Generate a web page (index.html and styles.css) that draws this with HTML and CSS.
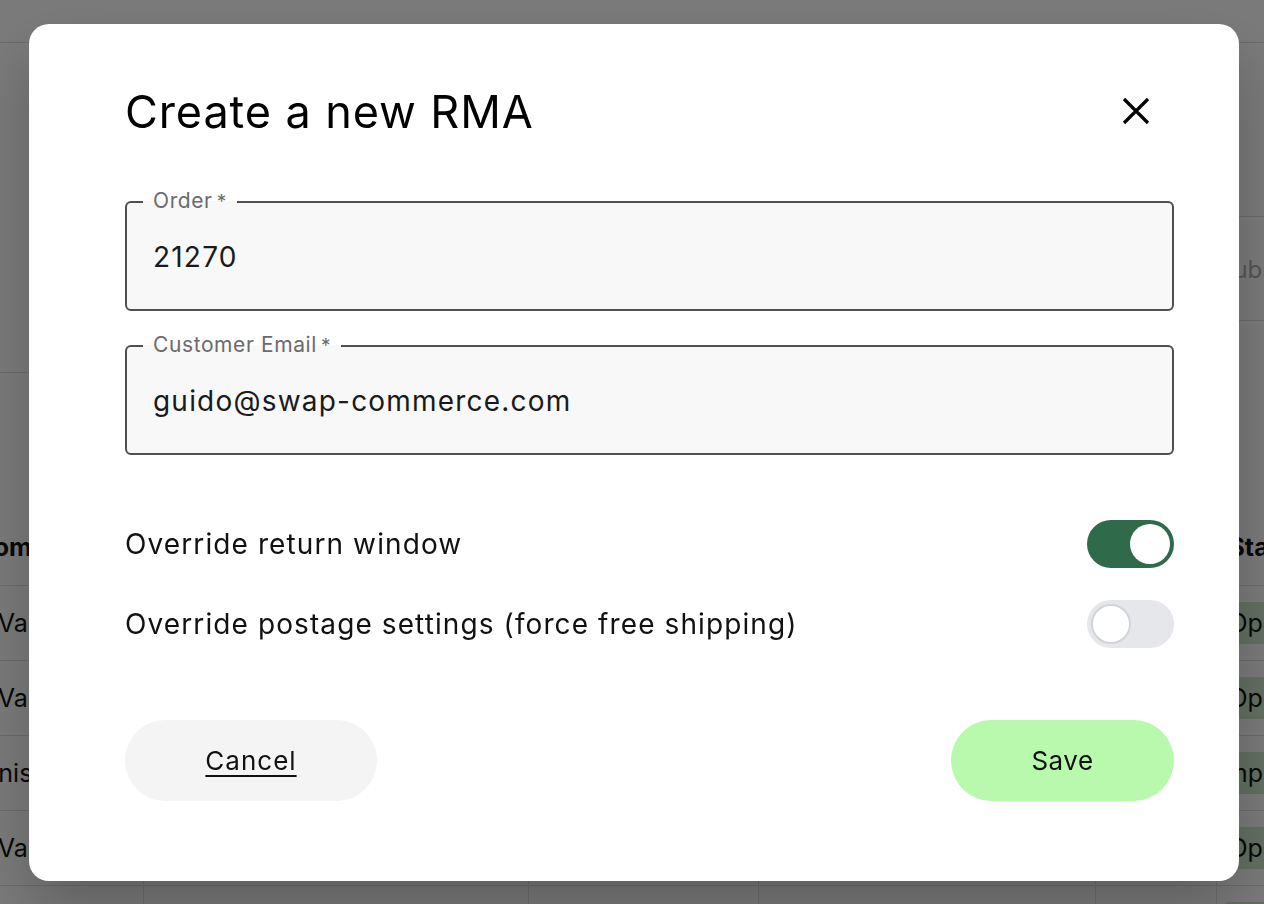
FILE: index.html
```html
<!DOCTYPE html>
<html lang="en">
<head>
<meta charset="utf-8">
<title>Create a new RMA</title>
<link rel="stylesheet" href="styles.css">
</head>
<body>
<div class="page">
  <div class="topbar"></div>
  <div class="summary">
    <div class="summary-left"></div>
    <div class="summary-right">
      <div class="search-box">Subscription</div>
    </div>
  </div>
  <div class="table-wrap">
    <table class="table">
      <thead>
        <tr><th class="c1">From</th><th class="c2">Order</th><th class="c3">Date</th><th class="c4">Reason</th><th class="c5">Items</th><th class="c6">Status</th></tr>
      </thead>
      <tbody>
        <tr><td class="c1">J. Vance</td><td class="c2">21270</td><td class="c3">12 Mar</td><td class="c4">Size</td><td class="c5">1</td><td class="c6"><span class="chip">Open</span></td></tr>
        <tr><td class="c1">J. Vance</td><td class="c2">21268</td><td class="c3">11 Mar</td><td class="c4">Size</td><td class="c5">2</td><td class="c6"><span class="chip">Open</span></td></tr>
        <tr><td class="c1">Janis</td><td class="c2">21255</td><td class="c3">10 Mar</td><td class="c4">Damaged</td><td class="c5">1</td><td class="c6 c6-done"><span class="chip">Completed</span></td></tr>
        <tr><td class="c1">J. Vance</td><td class="c2">21240</td><td class="c3">09 Mar</td><td class="c4">Colour</td><td class="c5">1</td><td class="c6"><span class="chip">Open</span></td></tr>
        <tr><td class="c1">J. Vance</td><td class="c2">21231</td><td class="c3">08 Mar</td><td class="c4">Size</td><td class="c5">3</td><td class="c6"><span class="chip">Open</span></td></tr>
      </tbody>
    </table>
  </div>
</div>

<div class="backdrop">
  <div class="modal" role="dialog" aria-labelledby="modal-title">
    <div class="modal-header">
      <h1 id="modal-title" class="modal-title">Create a new RMA</h1>
      <button class="close-btn" aria-label="Close">
        <svg width="28" height="28" viewBox="0 0 28 28" aria-hidden="true">
          <path d="M2 2 L26 26 M26 2 L2 26" stroke="#000" stroke-width="3.2" stroke-linecap="butt" fill="none"/>
        </svg>
      </button>
    </div>

    <div class="field">
      <span class="field-label">Order<span class="req">*</span></span>
      <span class="field-value">21270</span>
    </div>

    <div class="field field-email">
      <span class="field-label">Customer Email<span class="req">*</span></span>
      <span class="field-value">guido@swap-commerce.com</span>
    </div>

    <div class="toggle-row toggle-row-first">
      <span class="toggle-label">Override return window</span>
      <span class="toggle toggle-on"><span class="knob"></span></span>
    </div>
    <div class="toggle-row">
      <span class="toggle-label">Override postage settings (force free shipping)</span>
      <span class="toggle toggle-off"><span class="knob"></span></span>
    </div>

    <div class="actions">
      <button class="btn btn-cancel">Cancel</button>
      <button class="btn btn-save">Save</button>
    </div>
  </div>
</div>
</body>
</html>
```

FILE: styles.css
```css
* { box-sizing: border-box; }

html, body {
  margin: 0;
  padding: 0;
}

body {
  width: 1264px;
  height: 904px;
  overflow: hidden;
  background: #ffffff;
  font-family: Inter, "Liberation Sans", Arial, sans-serif;
  color: #111;
}

/* ---------- page behind the dialog ---------- */
.page {
  width: 1264px;
  height: 904px;
  overflow: hidden;
}

.topbar {
  height: 43px;
  border-bottom: 1px solid #e2e2e2;
}

.summary {
  display: flex;
  height: 330px;
}

.summary-left {
  flex: 1;
  border-bottom: 1px solid #e2e2e2;
}

.summary-right {
  width: 58px;
  padding-top: 173px;
}

.search-box {
  height: 105px;
  border-top: 1px solid #e2e2e2;
  border-bottom: 1px solid #e2e2e2;
  padding: 38px 0 0 12px;
  font-size: 24px;
  color: #b0b0b0;
  white-space: nowrap;
  overflow: hidden;
}

.table-wrap {
  margin-top: 137px;
  margin-left: -100px;
  width: 1600px;
}

.table {
  width: 1528px;
  border-collapse: collapse;
  table-layout: fixed;
  font-size: 25px;
}

.table th,
.table td {
  height: 75px;
  border-bottom: 1px solid #e2e2e2;
  border-right: 1px solid #e2e2e2;
  padding: 0 12px;
  text-align: left;
  white-space: nowrap;
  overflow: hidden;
}

.table th { font-weight: 700; }

.table th.c1,
.table td.c1 { width: 243px; padding-left: 70px; }
.c2 { width: 385px; }
.c3 { width: 230px; }
.c4 { width: 337px; }
.c5 { width: 121px; }
.table th.c6,
.table td.c6 { width: 212px; border-right: 0; padding-left: 6px; }
.table th.c6 { padding-left: 12px; }
.table td.c6-done { padding-left: 0; }
.table td.c6-done .chip { margin-left: -30px; }

.chip {
  display: inline-block;
  padding: 6px 10px 6px 6px;
  border-radius: 6px;
  background: #cfe8cc;
}

/* ---------- dialog ---------- */
.backdrop {
  position: fixed;
  inset: 0;
  background: rgba(0, 0, 0, 0.52);
  padding: 24px 25px 23px 29px;
}

.modal {
  width: 1210px;
  height: 857px;
  background: #fff;
  border-radius: 20px;
  padding: 57px 65px 80px 96px;
  display: flex;
  flex-direction: column;
  box-shadow: 0 30px 60px rgba(0, 0, 0, 0.22);
}

.modal-header {
  height: 60px;
  display: flex;
  align-items: center;
  justify-content: space-between;
  margin-bottom: 60px;
}

.modal-title {
  margin: 0;
  font-size: 45px;
  font-weight: 400;
  color: #000;
  letter-spacing: 0.9px;
  line-height: 1;
}

.close-btn {
  width: 28px;
  height: 28px;
  padding: 0;
  margin-right: 24px;
  border: 0;
  background: none;
  display: flex;
}

.field {
  position: relative;
  height: 110px;
  border: 2px solid #4f4f4f;
  border-radius: 6px;
  background: #f8f8f8;
  display: flex;
  align-items: center;
  padding: 0 0 0 26px;
}

.field-email { margin-top: 34px; }

.field-label {
  position: absolute;
  top: -15px;
  left: 16px;
  padding: 0 10px;
  font-size: 21px;
  line-height: 26px;
  letter-spacing: 0.6px;
  color: #6b6b6b;
  background: linear-gradient(#fff 50%, #f8f8f8 50%);
}

.req {
  margin-left: 4px;
  font-size: 19px;
}

.field-value {
  font-size: 28px;
  letter-spacing: 1.2px;
  color: #1a1a1a;
  margin-top: 2px;
}

.toggle-row {
  height: 48px;
  display: flex;
  align-items: center;
  justify-content: space-between;
  margin-top: 32px;
}

.toggle-row-first { margin-top: 65px; }

.toggle-label {
  font-size: 28px;
  letter-spacing: 1.1px;
  color: #111;
}

.toggle {
  width: 87px;
  height: 48px;
  border-radius: 24px;
  display: flex;
  align-items: center;
  padding: 0 4px;
}

.toggle-on {
  background: #2f6b4a;
  justify-content: flex-end;
}

.toggle-off {
  background: #e6e7eb;
  justify-content: flex-start;
}

.knob {
  width: 40px;
  height: 40px;
  border-radius: 50%;
  background: #fff;
}

.toggle-off .knob {
  border: 2px solid #d2d4d9;
}

.actions {
  margin-top: 72px;
  display: flex;
  justify-content: space-between;
}

.btn {
  height: 81px;
  border: 0;
  border-radius: 41px;
  font-family: Inter, "Liberation Sans", Arial, sans-serif;
  font-size: 26px;
  color: #111;
  padding: 0;
}

.btn-cancel {
  width: 252px;
  background: #f4f4f4;
  letter-spacing: 1px;
  text-decoration: underline;
  text-underline-offset: 5px;
  text-decoration-thickness: 2px;
}

.btn-save {
  width: 223px;
  background: #b9f9ad;
  letter-spacing: 0.5px;
}
```
